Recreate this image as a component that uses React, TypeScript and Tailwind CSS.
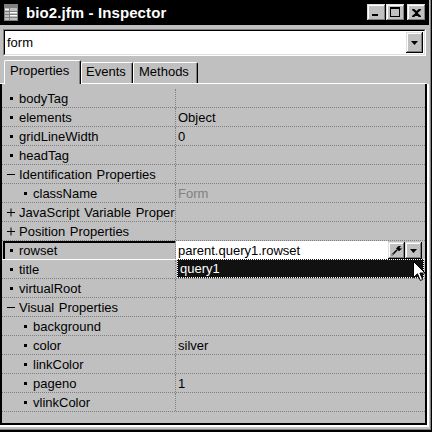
import React from "react";

const raised =
  "shadow-[inset_-1px_-1px_0_#000,inset_1px_1px_0_#dfdfdf,inset_-2px_-2px_0_#808080,inset_2px_2px_0_#fff]";

type Row = {
  name: string;
  lvl: 0 | 1;
  kind: "b" | "+" | "-";
  value?: string;
  gray?: boolean;
  editor?: boolean;
};

const rows: Row[] = [
  { name: "bodyTag", lvl: 0, kind: "b" },
  { name: "elements", lvl: 0, kind: "b", value: "Object" },
  { name: "gridLineWidth", lvl: 0, kind: "b", value: "0" },
  { name: "headTag", lvl: 0, kind: "b" },
  { name: "Identification Properties", lvl: 0, kind: "-" },
  { name: "className", lvl: 1, kind: "b", value: "Form", gray: true },
  { name: "JavaScript Variable Properties", lvl: 0, kind: "+" },
  { name: "Position Properties", lvl: 0, kind: "+" },
  { name: "rowset", lvl: 0, kind: "b", editor: true },
  { name: "title", lvl: 0, kind: "b" },
  { name: "virtualRoot", lvl: 0, kind: "b" },
  { name: "Visual Properties", lvl: 0, kind: "-" },
  { name: "background", lvl: 1, kind: "b" },
  { name: "color", lvl: 1, kind: "b", value: "silver" },
  { name: "linkColor", lvl: 1, kind: "b" },
  { name: "pageno", lvl: 1, kind: "b", value: "1" },
  { name: "vlinkColor", lvl: 1, kind: "b" },
];

function Marker({ kind, lvl }: { kind: Row["kind"]; lvl: 0 | 1 }) {
  if (kind === "b") {
    return (
      <span
        className={
          lvl === 1
            ? "shrink-0 w-[3px] h-[3px] bg-black ml-[22px] mr-[6px]"
            : "shrink-0 w-[3px] h-[3px] bg-black ml-[8px] mr-[6px]"
        }
      />
    );
  }
  if (kind === "-") {
    return <span className="shrink-0 w-[8px] h-[1px] bg-black ml-[5px] mr-[4px]" />;
  }
  return (
    <svg width="9" height="9" viewBox="0 0 9 9" className="shrink-0 ml-[5px] mr-[3px]">
      <rect x="0" y="4" width="8" height="1" fill="#000" />
      <rect x="3.5" y="0.5" width="1" height="8" fill="#000" />
    </svg>
  );
}

function Arrow() {
  return (
    <svg width="7" height="4" viewBox="0 0 7 4">
      <path d="M0 0 H7 L3.5 4 Z" fill="#000" />
    </svg>
  );
}

export default function App() {
  return (
    <div className="relative w-[432px] h-[432px] bg-black pr-[1px] pb-[2px] overflow-hidden font-['Liberation_Sans',Arial,sans-serif] text-[13px] text-black">
      <div className="w-full h-full bg-[#808080] pr-[1px] pb-[1px]">
        <div className="w-full h-full bg-[#c0c0c0] flex flex-col">
          {/* Title bar */}
          <div className="h-[25px] w-[429px] bg-black flex items-center pl-[4px] pr-[3px] shrink-0">
            <svg width="14" height="17" viewBox="0 0 14 17" className="shrink-0">
              <rect x="0.5" y="0.5" width="13" height="16" fill="#c0c0c0" stroke="#808080" />
              <rect x="1" y="1" width="12" height="3" fill="#808080" />
              <rect x="5" y="4" width="1" height="12" fill="#808080" />
              <rect x="1" y="7" width="12" height="1" fill="#808080" />
              <rect x="1" y="10" width="12" height="1" fill="#808080" />
              <rect x="1" y="13" width="12" height="1" fill="#808080" />
              <rect x="1" y="5" width="4" height="1" fill="#fff" />
              <rect x="6" y="8" width="7" height="1" fill="#fff" />
              <rect x="6" y="11" width="7" height="1" fill="#fff" />
            </svg>
            <span className="ml-[8px] text-white font-bold text-[15px] leading-none tracking-[0.1px]">
              bio2.jfm - Inspector
            </span>
            <div className="ml-auto flex items-center">
              <div className={`w-[19px] h-[17px] bg-[#c0c0c0] ${raised} relative`}>
                <span className="absolute left-[5px] top-[10px] w-[6px] h-[2px] bg-black" />
              </div>
              <div className={`w-[19px] h-[17px] bg-[#c0c0c0] ${raised} relative`}>
                <span className="absolute left-[4px] top-[3px] w-[10px] h-[10px] border border-black border-t-2" />
              </div>
              <div className={`ml-[2px] w-[19px] h-[17px] bg-[#c0c0c0] ${raised} flex items-center justify-center`}>
                <svg width="9" height="8" viewBox="0 0 9 8">
                  <path d="M0.5 0 L4.5 3.2 L8.5 0 M0.5 8 L4.5 4.8 L8.5 8" stroke="#000" strokeWidth="2" fill="none" />
                  <path d="M1 0.5 L8 7.5 M8 0.5 L1 7.5" stroke="#000" strokeWidth="1.6" />
                </svg>
              </div>
            </div>
          </div>

          {/* Combo box */}
          <div className="mt-[4px] ml-[3px] w-[423px] h-[27px] shrink-0 border border-t-[#808080] border-l-[#808080] border-r-white border-b-white">
            <div className="w-full h-full border border-t-black border-l-black border-r-[#dfdfdf] border-b-[#dfdfdf] bg-white flex items-center">
              <span className="pl-[2px] flex-1 leading-none">form</span>
              <div className={`w-[17px] h-[21px] mr-[1px] bg-[#c0c0c0] ${raised} flex items-center justify-center`}>
                <Arrow />
              </div>
            </div>
          </div>

          {/* Tabs */}
          <div className="h-[28px] w-[427px] shrink-0 border-b border-white flex items-end pl-[4px]">
            <div className="relative -mb-[1px] w-[77px] h-[24px] bg-[#c0c0c0] border-t border-l border-white border-r border-r-black rounded-t-[2px] shadow-[inset_-1px_0_0_#808080] pl-[5px] pt-[2px] leading-[16px] text-[13px]">
              Properties
            </div>
            <div className="w-[52px] h-[21px] bg-[#c0c0c0] border-t border-l border-white border-r border-r-black rounded-t-[2px] shadow-[inset_-1px_0_0_#808080] pl-[4px] pt-[1px] leading-[16px]">
              Events
            </div>
            <div className="w-[65px] h-[21px] bg-[#c0c0c0] border-t border-l border-white border-r border-r-black rounded-t-[2px] shadow-[inset_-1px_0_0_#808080] pl-[5px] pt-[1px] leading-[16px]">
              Methods
            </div>
          </div>

          {/* Grid */}
          <div className="flex-1 mb-[2px] w-[429px] border-r-2 border-b-2 border-white flex">
            <div className="flex-1 border-l-2 border-r-2 border-b-2 border-black pt-[5px] flex flex-col">
              {rows.map((r) => (
                <div
                  key={r.name}
                  className={
                    r.editor
                      ? "relative h-[19px] flex border-b border-white shrink-0"
                      : "relative h-[19px] flex border-b border-dotted border-[#808080] shrink-0"
                  }
                >
                  <div className="relative w-[174px] shrink-0 border-r border-dotted border-[#808080] flex items-center overflow-hidden whitespace-nowrap">
                    {r.editor && (
                      <>
                        <span className="absolute left-[1px] top-0 right-0 h-[2px] bg-black" />
                        <span className="absolute left-[1px] top-0 bottom-0 w-[2px] bg-black" />
                      </>
                    )}
                    <Marker kind={r.kind} lvl={r.lvl} />
                    <span className="leading-none [word-spacing:1px]">{r.name}</span>
                  </div>
                  {r.editor ? (
                    <div className="relative flex-1 flex">
                      <div className="flex-1 bg-white flex items-center pl-[2px]">
                        <span className="leading-none">parent.query1.rowset</span>
                      </div>
                      <div className={`w-[17px] h-[17px] mt-[1px] bg-[#c0c0c0] ${raised} flex items-center justify-center`}>
                        <svg width="11" height="11" viewBox="0 0 11 11">
                          <path d="M1 10 L6 5" stroke="#000" strokeWidth="1.6" />
                          <path d="M5 3.5 L7.5 1 L10 1 L8.5 2.8 L9.2 3.8 L10.5 2.5 L10.5 4 L8 6.3 Z" fill="#000" />
                          <path d="M0.5 10.5 L2.5 8.5" stroke="#808080" strokeWidth="1" />
                        </svg>
                      </div>
                      <div className={`w-[17px] h-[17px] mt-[1px] mr-[3px] bg-[#c0c0c0] ${raised} flex items-center justify-center`}>
                        <Arrow />
                      </div>
                      <div className="absolute left-[1px] top-[18px] w-[247px] h-[19px] bg-[#111] border border-dotted border-white z-10 flex items-center pl-[2px]">
                        <span className="text-white leading-none">query1</span>
                      </div>
                    </div>
                  ) : (
                    <div className="flex-1 flex items-center pl-[2px]">
                      <span className={r.gray ? "leading-none text-[#808080]" : "leading-none"}>
                        {r.value ?? ""}
                      </span>
                    </div>
                  )}
                </div>
              ))}
            </div>
          </div>
        </div>
      </div>

      {/* Mouse cursor */}
      <svg
        width="13"
        height="21"
        viewBox="0 0 13 21"
        className="absolute left-[413px] top-[261px] z-20"
      >
        <path
          d="M0.5 0.5 L0.5 16.5 L4.5 12.8 L7.3 19.5 L9.6 18.5 L6.9 12 L12 12 Z"
          fill="#fff"
          stroke="#000"
          strokeWidth="1"
        />
      </svg>
    </div>
  );
}
